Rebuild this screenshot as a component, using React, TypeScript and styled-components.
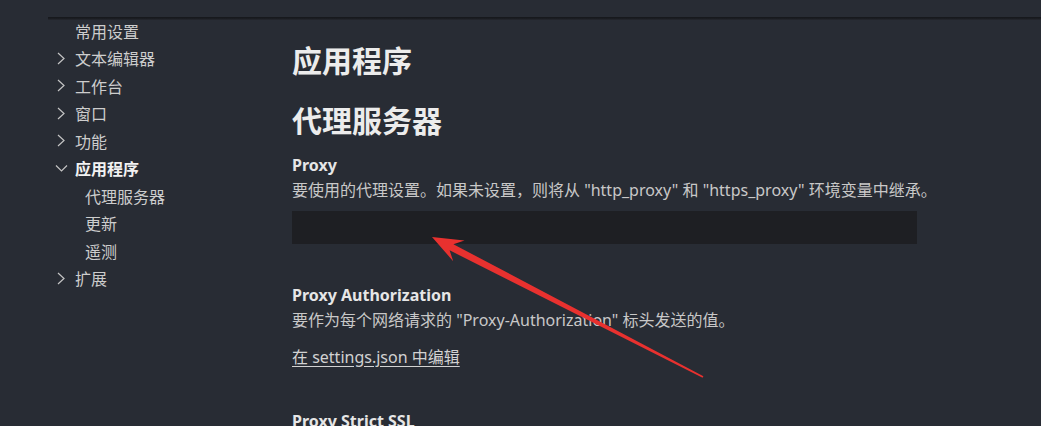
import React from 'react';
import styled, { createGlobalStyle } from 'styled-components';

const GlobalStyle = createGlobalStyle`
  html, body {
    margin: 0;
    padding: 0;
    background: #282c34;
    overflow: hidden;
  }
  * {
    box-sizing: border-box;
  }
`;

const FONT = `"Noto Sans", "Noto Sans CJK SC", sans-serif`;

// Layout
const Page = styled.div`
  position: relative;
  width: 1041px;
  height: 426px;
  padding: 17px 0 0 48px;
  overflow: hidden;
  background: #282c34;
  font-family: ${FONT};
  color: #cccccc;
`;

const TopShadow = styled.div`
  height: 3px;
  background: linear-gradient(#15171b, #1c1e23 60%, #262930);
`;

const Columns = styled.div`
  display: flex;
`;

// Sidebar tree
const Toc = styled.nav`
  width: 244px;
  margin-top: -3px;
  flex-shrink: 0;
  display: flex;
  flex-direction: column;
`;

const TocRow = styled.div<{ $level: number; $active?: boolean }>`
  display: flex;
  align-items: center;
  height: 27.5px;
  padding-left: ${(p) => 8 + p.$level * 10}px;
  font-size: 16px;
  font-weight: ${(p) => (p.$active ? 700 : 400)};
  color: ${(p) => (p.$active ? '#f2f2f2' : '#cdcdcd')};
  white-space: nowrap;
`;

const Twistie = styled.span`
  width: 17px;
  height: 16px;
  margin-right: 2px;
  padding-left: 1px;
  display: flex;
  align-items: center;
  justify-content: flex-start;
  color: #c4c4c4;
`;

// Main settings column
const Content = styled.main`
  flex: 1;
  padding-top: 21px;
`;

const SectionTitle = styled.h2<{ $gap?: number }>`
  margin: ${(p) => p.$gap ?? 0}px 0 0;
  font-size: 30px;
  line-height: 40px;
  font-weight: 700;
  color: #ececec;
`;

const Setting = styled.div<{ $gap: number }>`
  margin-top: ${(p) => p.$gap}px;
  width: 660px;
`;

const Label = styled.div`
  font-size: 16px;
  line-height: 25px;
  font-weight: 700;
  color: #e6e6e6;
`;

const Description = styled.div`
  font-size: 16px;
  line-height: 25px;
  color: #c8c8c8;
  white-space: nowrap;
`;

const TextInput = styled.div`
  margin-top: 8.5px;
  width: 625px;
  height: 33px;
  background: #1e1f23;
`;

const EditLink = styled.a`
  display: inline-block;
  margin-top: 12px;
  font-size: 16px;
  line-height: 25px;
  color: #d2d2d2;
  text-decoration: underline;
  text-underline-offset: 3px;
`;

const ArrowLayer = styled.svg`
  position: absolute;
  left: 0;
  top: 0;
  pointer-events: none;
`;

const ChevronRight = () => (
  <svg width="8" height="13" viewBox="0 0 8 13" fill="none">
    <polyline points="1,1 7,6.5 1,12" stroke="currentColor" strokeWidth="1.2" />
  </svg>
);

const ChevronDown = () => (
  <svg width="13" height="8" viewBox="0 0 13 8" fill="none" style={{ marginLeft: -2 }}>
    <polyline points="1,1.5 6.5,7 12,1.5" stroke="currentColor" strokeWidth="1.2" />
  </svg>
);

type TocItem = { label: string; level: number; twistie?: 'right' | 'down'; active?: boolean };

const tocItems: TocItem[] = [
  { label: '常用设置', level: 0 },
  { label: '文本编辑器', level: 0, twistie: 'right' },
  { label: '工作台', level: 0, twistie: 'right' },
  { label: '窗口', level: 0, twistie: 'right' },
  { label: '功能', level: 0, twistie: 'right' },
  { label: '应用程序', level: 0, twistie: 'down', active: true },
  { label: '代理服务器', level: 1 },
  { label: '更新', level: 1 },
  { label: '遥测', level: 1 },
  { label: '扩展', level: 0, twistie: 'right' },
];

const App: React.FC = () => {
  return (
    <>
      <GlobalStyle />
      <Page>
        <TopShadow />
        <Columns>
          <Toc>
            {tocItems.map((item) => (
              <TocRow key={item.label} $level={item.level} $active={item.active}>
                <Twistie>
                  {item.twistie === 'right' && <ChevronRight />}
                  {item.twistie === 'down' && <ChevronDown />}
                </Twistie>
                {item.label}
              </TocRow>
            ))}
          </Toc>

          <Content>
            <SectionTitle>应用程序</SectionTitle>
            <SectionTitle $gap={20}>代理服务器</SectionTitle>

            <Setting $gap={11.5}>
              <Label>Proxy</Label>
              <Description>
                要使用的代理设置。如果未设置，则将从 "http_proxy" 和 "https_proxy" 环境变量中继承。
              </Description>
              <TextInput />
            </Setting>

            <Setting $gap={38.5}>
              <Label>Proxy Authorization</Label>
              <Description>要作为每个网络请求的 "Proxy-Authorization" 标头发送的值。</Description>
              <EditLink>在 settings.json 中编辑</EditLink>
            </Setting>

            <Setting $gap={39.5}>
              <Label>Proxy Strict SSL</Label>
            </Setting>
          </Content>
        </Columns>

        {/* red annotation arrow drawn over the screenshot */}
        <ArrowLayer width="1041" height="426" viewBox="0 0 1041 426">
          <polygon
            points="432,237 464.5,240.5 453.4,244.2 703.4,376.3 702.6,377.7 449.6,250.3 453.2,261.2"
            fill="#e8312f"
          />
        </ArrowLayer>
      </Page>
    </>
  );
};

export default App;
